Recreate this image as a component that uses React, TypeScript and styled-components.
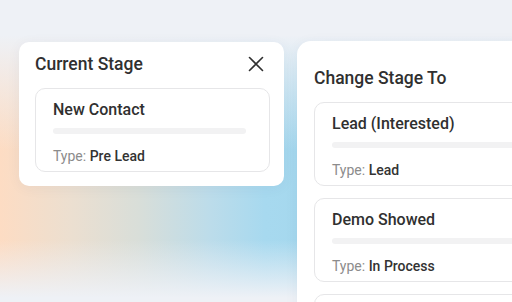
import React from "react";
import styled, { createGlobalStyle } from "styled-components";

const GlobalStyle = createGlobalStyle`
    html, body {
        margin: 0;
        padding: 0;
        overflow: hidden;
    }
    body {
        font-family: Roboto, "Liberation Sans", sans-serif;
        background: #eef1f6;
    }
`;

const Page = styled.div`
    width: 512px;
    height: 302px;
    overflow: hidden;
    display: flex;
    align-items: flex-start;
    gap: 13px;
    padding: 42px 0 0 19px;
    box-sizing: border-box;
    background:
        linear-gradient(to bottom, #eef1f6 0px, #eef1f6 35px, rgba(238, 241, 246, 0) 150px, rgba(238, 241, 246, 0) 240px, #eef1f6 298px),
        linear-gradient(to right, #fddcc3 0px, #ecdfd0 70px, #d8ded9 140px, #bcdcea 210px, #a7d9ef 265px, #a5d8ee 300px);
`;

const Panel = styled.div<{ $width: number; $radius: number }>`
    flex: 0 0 ${(p) => p.$width}px;
    background: #ffffff;
    border-radius: ${(p) => p.$radius}px;
    box-shadow: 0 2px 14px rgba(40, 60, 90, 0.05);
    box-sizing: border-box;
`;

const CurrentPanel = styled(Panel)`
    padding: 11px 14px 14px 16px;
`;

const ChangePanel = styled(Panel)`
    margin-top: -1px;
    padding: 26px 0 0 17px;
    height: 300px;
`;

const PanelHeader = styled.div`
    display: flex;
    align-items: center;
    justify-content: space-between;
    height: 22px;
    margin-bottom: 13px;
`;

const Title = styled.h2`
    margin: 0;
    font-size: 17.5px;
    font-weight: 500;
    color: #303030;
`;

const CloseButton = styled.button`
    border: none;
    background: none;
    padding: 0;
    margin-right: 6px;
    width: 16px;
    height: 16px;
    display: flex;
    align-items: center;
    justify-content: center;
    color: #303030;
    cursor: pointer;
`;

const StageList = styled.div`
    display: flex;
    flex-direction: column;
    gap: 12px;
`;

const StageCard = styled.div<{ $width: number }>`
    width: ${(p) => p.$width}px;
    height: 84px;
    box-sizing: border-box;
    border: 1px solid #e6e6e8;
    border-radius: 10px;
    padding: 10px 23px 0 17px;
    display: flex;
    flex-direction: column;
`;

const StageName = styled.div`
    font-size: 16px;
    font-weight: 500;
    color: #303030;
    line-height: 21px;
`;

const Bar = styled.div`
    height: 6px;
    border-radius: 3px;
    background: #f2f2f3;
    margin-top: 8px;
`;

const TypeLine = styled.div`
    margin-top: 13px;
    font-size: 14px;
    font-weight: 500;
    line-height: 18px;
    color: #333333;
`;

const TypeLabel = styled.span`
    font-weight: 400;
    color: #8c8c8c;
`;

type Stage = { name: string; type: string };

const changeStages: Stage[] = [
    { name: "Lead (Interested)", type: "Lead" },
    { name: "Demo Showed", type: "In Process" },
];

const StageItem: React.FC<{ stage: Stage; width: number }> = ({ stage, width }) => (
    <StageCard $width={width}>
        <StageName>{stage.name}</StageName>
        <Bar />
        <TypeLine>
            <TypeLabel>Type:</TypeLabel> {stage.type}
        </TypeLine>
    </StageCard>
);

const App: React.FC = () => {
    return (
        <>
            <GlobalStyle />
            <Page>
                <CurrentPanel $width={265} $radius={10}>
                    <PanelHeader>
                        <Title>Current Stage</Title>
                        <CloseButton aria-label="close">
                            <svg width="16" height="16" viewBox="0 0 16 16" fill="none">
                                <path d="M1.5 1.5L14.5 14.5M14.5 1.5L1.5 14.5" stroke="currentColor" strokeWidth="1.6" strokeLinecap="round" />
                            </svg>
                        </CloseButton>
                    </PanelHeader>
                    <StageItem stage={{ name: "New Contact", type: "Pre Lead" }} width={235} />
                </CurrentPanel>

                <ChangePanel $width={280} $radius={14}>
                    <PanelHeader>
                        <Title>Change Stage To</Title>
                    </PanelHeader>
                    <StageList>
                        {changeStages.map((s) => (
                            <StageItem key={s.name} stage={s} width={250} />
                        ))}
                        {/* next stage card, only its top edge is in view */}
                        <StageCard $width={250} />
                    </StageList>
                </ChangePanel>
            </Page>
        </>
    );
};

export default App;
